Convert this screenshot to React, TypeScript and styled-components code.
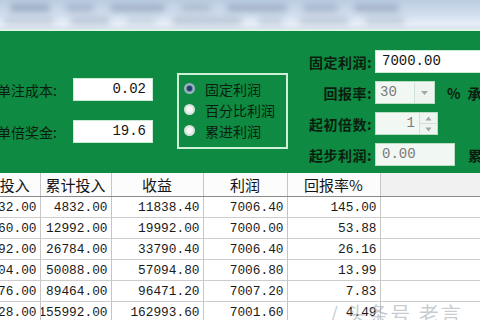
import React from 'react';
import styled, { createGlobalStyle } from 'styled-components';

const Global = createGlobalStyle`
  html, body { margin: 0; padding: 0; background: #fff; }
  body { font-family: "Noto Sans CJK SC", "Noto Sans", sans-serif; }
`;

const Screen = styled.div`
  width: 480px;
  height: 320px;
  overflow: hidden;
  display: flex;
  flex-direction: column;
  background: #fff;
  position: relative;
`;

const TopStrip = styled.div`
  height: 29px;
  flex: none;
  overflow: hidden;
  background: linear-gradient(180deg, #bccde2 0%, #cfdcec 45%, #e6eef7 82%, #d9e4ef 100%);
  display: flex;
  flex-direction: column;
  justify-content: space-around;
  padding: 2px 0;
  box-sizing: border-box;
`;

const BlobRow = styled.div<{ $shift: number }>`
  display: flex;
  gap: 16px;
  padding-left: ${p => p.$shift}px;
`;

const Blob = styled.span<{ $w: number; $o: number }>`
  width: ${p => p.$w}px;
  height: 8px;
  flex: none;
  border-radius: 4px;
  background: rgba(80, 100, 130, ${p => p.$o});
  filter: blur(3px);
`;

const Divider = styled.div`
  height: 2px;
  flex: none;
  background: #dff2e6;
`;

const GreenPanel = styled.div`
  height: 142px;
  flex: none;
  background: #0e8a42;
  display: flex;
  align-items: flex-start;
  overflow: hidden;
`;

const LeftForm = styled.div`
  flex: none;
  margin-left: -3px;
  padding-top: 47px;
  display: grid;
  grid-template-columns: 76px 80px;
  row-gap: 19px;
  align-items: center;
`;

const Label = styled.div<{ $right?: boolean }>`
  font-size: 14px;
  color: #0b1d0f;
  white-space: nowrap;
  text-align: ${p => (p.$right ? 'right' : 'left')};
  font-weight: ${p => (p.$right ? 700 : 400)};
  letter-spacing: ${p => (p.$right ? '0.5px' : '0')};
`;

const Field = styled.div<{ $w: number; $align?: string; $muted?: boolean }>`
  width: ${p => p.$w}px;
  height: 23px;
  box-sizing: border-box;
  background: ${p => (p.$muted ? '#f1f7f2' : '#ffffff')};
  border: 1px solid ${p => (p.$muted ? '#b9dcc3' : '#c9ebd3')};
  font-family: "Liberation Mono", monospace;
  font-size: 14px;
  line-height: 21px;
  color: ${p => (p.$muted ? '#7a7a7a' : '#151515')};
  text-align: ${p => p.$align || 'right'};
  padding: 0 6px;
  white-space: nowrap;
  overflow: hidden;
`;

const RadioBox = styled.div`
  flex: none;
  margin-left: 24px;
  margin-top: 42px;
  width: 111px;
  height: 76px;
  box-sizing: border-box;
  border: 2px solid #cdf0d6;
  padding: 3px 0 0 5px;
  display: flex;
  flex-direction: column;
`;

const RadioItem = styled.div`
  height: 21px;
  display: flex;
  align-items: center;
  gap: 10px;
  font-size: 14px;
  color: #0b1d0f;
  white-space: nowrap;
`;

const RadioDot = styled.span<{ $on?: boolean }>`
  width: 11px;
  height: 11px;
  flex: none;
  border-radius: 50%;
  box-sizing: border-box;
  border: 2px solid ${p => (p.$on ? '#9fb2c4' : '#d8e4dc')};
  background: ${p => (p.$on ? 'radial-gradient(circle, #24406a 0 45%, #6f8aa6 60%)' : 'radial-gradient(circle, #f6f8f6 0 50%, #d4e0d8 100%)')};
`;

const RightForm = styled.div`
  flex: none;
  margin-left: 15px;
  padding-top: 19px;
  display: grid;
  grid-template-columns: 69px auto;
  column-gap: 3px;
  row-gap: 8px;
  align-items: center;
`;

const FieldRow = styled.div`
  display: flex;
  align-items: center;
`;

const ComboBox = styled.div<{ $w: number }>`
  width: ${p => p.$w}px;
  height: 23px;
  box-sizing: border-box;
  background: #f1f7f2;
  border: 1px solid #b9dcc3;
  display: flex;
  font-family: "Liberation Mono", monospace;
  font-size: 14px;
  line-height: 21px;
  color: #7a7a7a;
`;

const ComboText = styled.span<{ $align?: string }>`
  flex: 1;
  padding: 0 4px;
  text-align: ${p => p.$align || 'left'};
`;

const DropBtn = styled.span`
  width: 19px;
  flex: none;
  border-left: 1px solid #cfe2d5;
  display: flex;
  align-items: center;
  justify-content: center;
  background: #eef4f0;
`;

const SpinBtns = styled.span`
  width: 17px;
  flex: none;
  border-left: 1px solid #cfe2d5;
  display: flex;
  flex-direction: column;
  background: #eef4f0;
`;

const SpinHalf = styled.span<{ $top?: boolean }>`
  flex: 1;
  display: flex;
  align-items: center;
  justify-content: center;
  border-bottom: ${p => (p.$top ? '1px solid #cfe2d5' : 'none')};
`;

const Trailing = styled.span<{ $ml: number }>`
  margin-left: ${p => p.$ml}px;
  font-size: 14px;
  color: #0b1d0f;
  white-space: nowrap;
  font-weight: 700;
`;

const TableWrap = styled.div`
  flex: 1;
  overflow: hidden;
  background: #fff;
`;

const Table = styled.table`
  margin-left: -10px;
  width: 490px;
  table-layout: fixed;
  border-collapse: collapse;
`;

const Th = styled.th<{ $blank?: boolean }>`
  height: 23px;
  padding: 0;
  font-size: 15px;
  font-weight: 400;
  color: #151515;
  text-align: center;
  white-space: nowrap;
  background: ${p => (p.$blank ? '#f1f1f1' : '#fcfcfc')};
  border-right: 1px solid #c6c6c6;
  border-bottom: 1px solid #8a8a8a;
`;

const Td = styled.td`
  height: 20px;
  padding: 0;
  border-right: 1px solid #c6c6c6;
  border-bottom: 1px solid #cdcdcd;
  overflow: hidden;
`;

const Cell = styled.div`
  display: flex;
  justify-content: flex-end;
  overflow: hidden;
  padding-right: 3px;
  font-family: "Liberation Mono", monospace;
  font-size: 12.8px;
  color: #1a1a1a;
  white-space: nowrap;
`;

const Watermark = styled.div`
  position: absolute;
  left: 330px;
  top: 299px;
  font-size: 20px;
  color: rgba(150, 160, 172, 0.55);
  white-space: nowrap;
  letter-spacing: 2px;
`;

const cols = [50, 71, 92, 84, 93, 100];
const headers = ['投入', '累计投入', '收益', '利润', '回报率%', ''];
const rows = [
  ['4832.00', '4832.00', '11838.40', '7006.40', '145.00'],
  ['8160.00', '12992.00', '19992.00', '7000.00', '53.88'],
  ['13792.00', '26784.00', '33790.40', '7006.40', '26.16'],
  ['23304.00', '50088.00', '57094.80', '7006.80', '13.99'],
  ['39376.00', '89464.00', '96471.20', '7007.20', '7.83'],
  ['66528.00', '155992.00', '162993.60', '7001.60', '4.49'],
];

const Caret = () => (
  <svg width="9" height="6" viewBox="0 0 9 6">
    <path d="M1 1 L4.5 5 L8 1" fill="#9aa" />
  </svg>
);

const SpinArrow = ({ up }: { up?: boolean }) => (
  <svg width="7" height="5" viewBox="0 0 7 5">
    <path d={up ? 'M0.5 4.5 L3.5 0.5 L6.5 4.5Z' : 'M0.5 0.5 L3.5 4.5 L6.5 0.5Z'} fill="#9aa" />
  </svg>
);

export default function App() {
  return (
    <Screen>
      <Global />
      <TopStrip>
        <BlobRow $shift={10}>
          <Blob $w={40} $o={0.35} />
          <Blob $w={28} $o={0.25} />
          <Blob $w={55} $o={0.3} />
          <Blob $w={30} $o={0.2} />
          <Blob $w={60} $o={0.3} />
          <Blob $w={35} $o={0.25} />
          <Blob $w={45} $o={0.3} />
        </BlobRow>
        <BlobRow $shift={4}>
          <Blob $w={50} $o={0.2} />
          <Blob $w={40} $o={0.25} />
          <Blob $w={30} $o={0.15} />
          <Blob $w={70} $o={0.25} />
          <Blob $w={25} $o={0.2} />
          <Blob $w={50} $o={0.22} />
          <Blob $w={40} $o={0.2} />
        </BlobRow>
      </TopStrip>
      <Divider />
      <GreenPanel>
        <LeftForm>
          <Label>单注成本:</Label>
          <Field $w={80}>0.02</Field>
          <Label>单倍奖金:</Label>
          <Field $w={80}>19.6</Field>
        </LeftForm>
        <RadioBox>
          <RadioItem><RadioDot $on />固定利润</RadioItem>
          <RadioItem><RadioDot />百分比利润</RadioItem>
          <RadioItem><RadioDot />累进利润</RadioItem>
        </RadioBox>
        <RightForm>
          <Label $right>固定利润:</Label>
          <Field $w={120} $align="left">7000.00</Field>
          <Label $right>回报率:</Label>
          <FieldRow>
            <ComboBox $w={60}>
              <ComboText>30</ComboText>
              <DropBtn><Caret /></DropBtn>
            </ComboBox>
            <Trailing $ml={12}>%</Trailing>
            <Trailing $ml={7}>承</Trailing>
          </FieldRow>
          <Label $right>起初倍数:</Label>
          <FieldRow>
            <ComboBox $w={63}>
              <ComboText $align="right">1</ComboText>
              <SpinBtns>
                <SpinHalf $top><SpinArrow up /></SpinHalf>
                <SpinHalf><SpinArrow /></SpinHalf>
              </SpinBtns>
            </ComboBox>
          </FieldRow>
          <Label $right>起步利润:</Label>
          <FieldRow>
            <Field $w={80} $align="left" $muted>0.00</Field>
            <Trailing $ml={13}>累</Trailing>
          </FieldRow>
        </RightForm>
      </GreenPanel>
      <TableWrap>
        <Table>
          <colgroup>
            {cols.map((w, i) => <col key={i} style={{ width: w }} />)}
          </colgroup>
          <thead>
            <tr>
              {headers.map((h, i) => <Th key={i} $blank={h === ''}>{h}</Th>)}
            </tr>
          </thead>
          <tbody>
            {rows.map((r, i) => (
              <tr key={i}>
                {r.map((c, j) => <Td key={j}><Cell>{c}</Cell></Td>)}
                <Td />
              </tr>
            ))}
          </tbody>
        </Table>
      </TableWrap>
      <Watermark>/ 头条号 老言</Watermark>
    </Screen>
  );
}
